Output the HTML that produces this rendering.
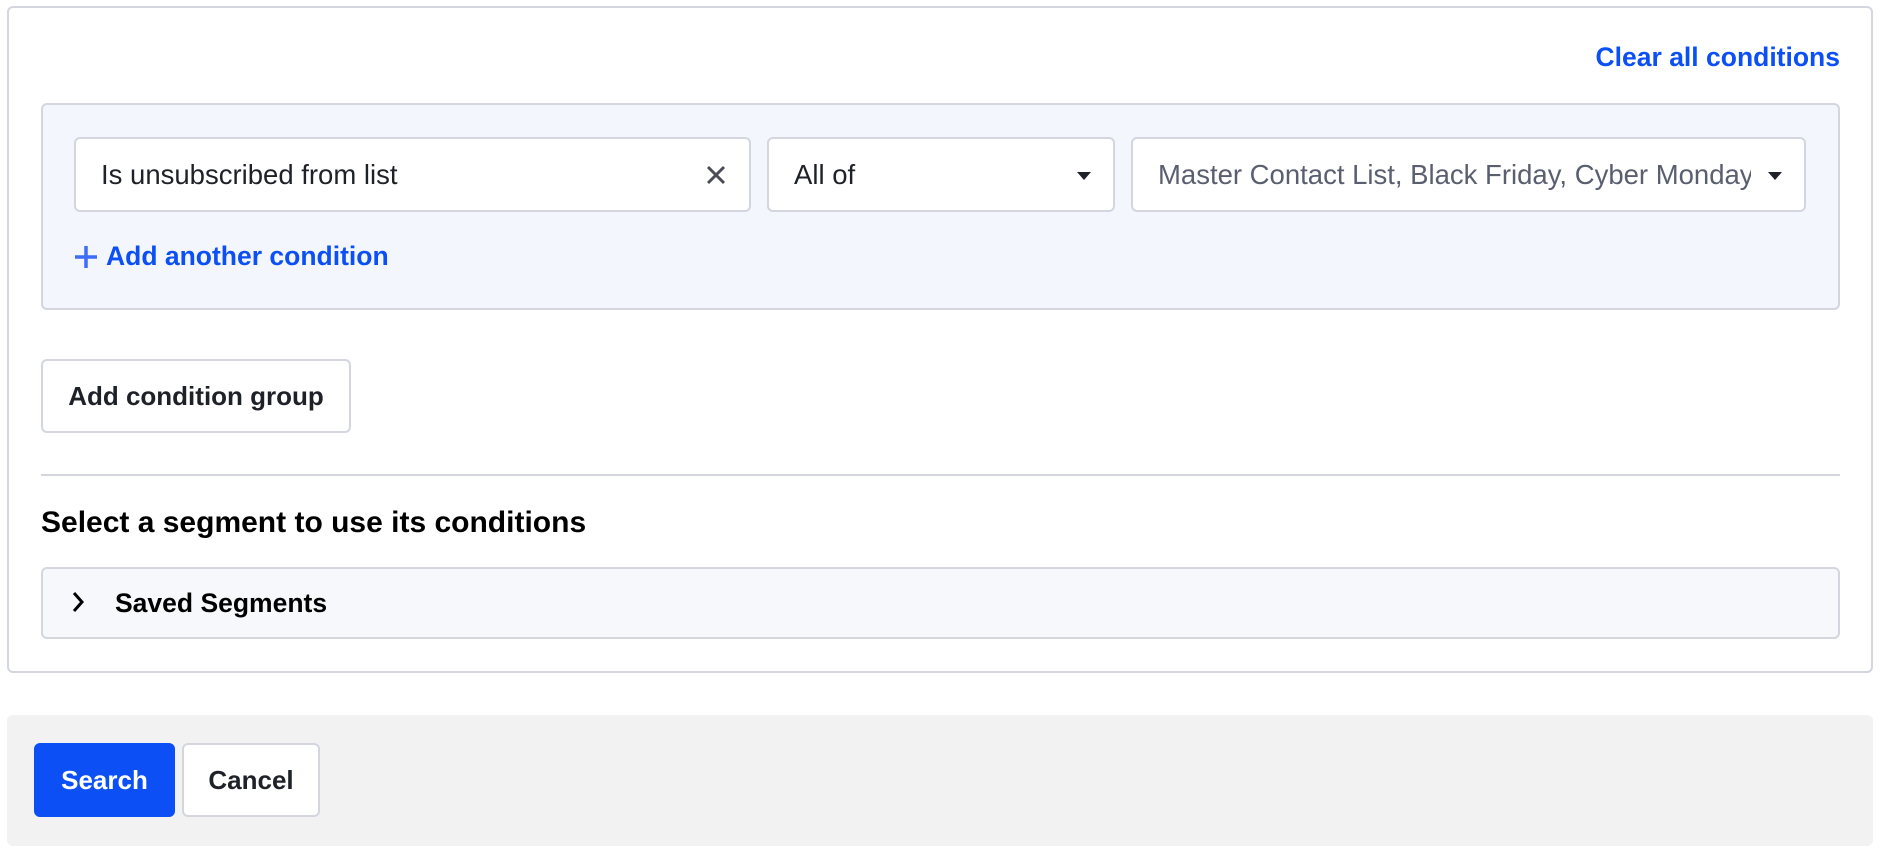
<!DOCTYPE html>
<html><head><meta charset="utf-8"><style>
*{box-sizing:border-box;margin:0;padding:0}
body{width:1880px;height:852px;background:#fff;font-family:"Liberation Sans",sans-serif;position:relative;overflow:hidden;color:#1f2129}
.abs{position:absolute}
.panel{left:7px;top:6px;width:1866px;height:667px;border:2px solid #d3d6df;border-radius:6px;background:#fff}
.clear{right:40px;top:42px;color:#0b4ff5;font-weight:bold;font-size:26.5px}
.group{left:41px;top:103px;width:1799px;height:207px;border:2px solid #d3d6df;border-radius:6px;background:#f3f6fd}
.inp{top:137px;height:75px;border:2px solid #d3d6df;border-radius:6px;background:#fff;font-size:27.5px;display:flex;align-items:center;padding-left:25px}
.tri{position:absolute;right:22px;top:33px;width:0;height:0;border-left:7px solid transparent;border-right:7px solid transparent;border-top:8px solid #1f2129}
.add{left:74px;top:241px;color:#0b4ff5;font-weight:bold;font-size:26.5px;display:flex;align-items:center}
.btn{border:2px solid #d3d6df;border-radius:6px;background:#fff;font-weight:bold;font-size:26px;display:flex;align-items:center;justify-content:center;color:#1f2129}
</style></head><body>
<div class="abs panel"></div>
<div class="abs clear">Clear all conditions</div>
<div class="abs group"></div>
<div class="abs inp" style="left:74px;width:677px">Is unsubscribed from list
<svg class="abs" style="right:22px;top:25px" width="22" height="22" viewBox="0 0 22 22"><path d="M3 3L19 19M19 3L3 19" stroke="#4a4d57" stroke-width="3"/></svg></div>
<div class="abs inp" style="left:767px;width:348px">All of<span class="tri"></span></div>
<div class="abs inp" style="left:1131px;width:675px;color:#5a5f70;overflow:hidden;white-space:nowrap"><span style="display:inline-block;width:593px;overflow:hidden">Master Contact List, Black Friday, Cyber Monday</span><span class="tri"></span></div>
<div class="abs add"><svg width="24" height="24" viewBox="0 0 24 24" style="margin-right:8px"><path d="M12 1V23M1 12H23" stroke="#3d6ef5" stroke-width="3.5"/></svg>Add another condition</div>
<div class="abs btn" style="left:41px;top:359px;width:310px;height:74px">Add condition group</div>
<div class="abs" style="left:41px;top:474px;width:1799px;height:2px;background:#d3d6df"></div>
<div class="abs" style="left:41px;top:506px;font-size:30px;font-weight:bold;color:#000">Select a segment to use its conditions</div>
<div class="abs" style="left:41px;top:567px;width:1799px;height:72px;border:2px solid #d3d6df;border-radius:6px;background:#f7f8fc"></div>
<svg class="abs" style="left:70px;top:590px" width="16" height="24" viewBox="0 0 16 24"><path d="M4 3L12 12L4 21" stroke="#000" stroke-width="3" fill="none"/></svg>
<div class="abs" style="left:115px;top:588px;font-size:26.5px;font-weight:bold;color:#000">Saved Segments</div>
<div class="abs" style="left:7px;top:715px;width:1866px;height:131px;background:#f2f2f2;border-radius:6px"></div>
<div class="abs btn" style="left:34px;top:743px;width:141px;height:74px;background:#0b4ff5;border-color:#0b4ff5;color:#fff">Search</div>
<div class="abs btn" style="left:182px;top:743px;width:138px;height:74px">Cancel</div>
</body></html>
